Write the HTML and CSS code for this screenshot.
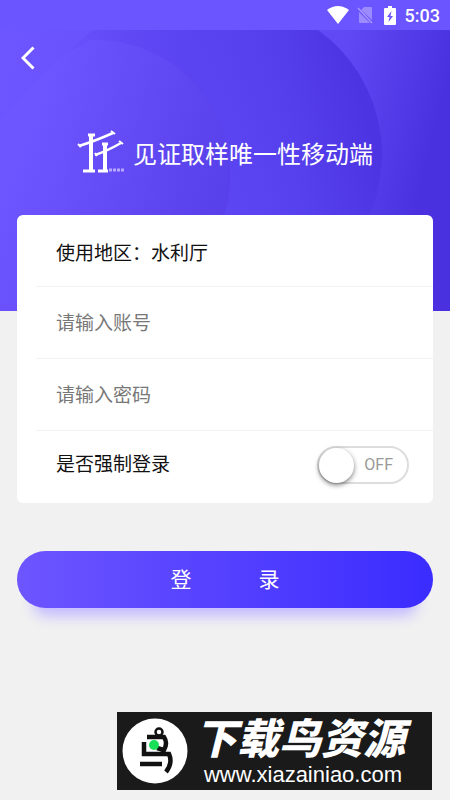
FILE: index.html
```html
<!DOCTYPE html>
<html lang="zh-CN">
<head>
<meta charset="utf-8">
<meta name="viewport" content="width=device-width, initial-scale=1">
<title>见证取样唯一性移动端</title>
<link rel="stylesheet" href="styles.css">
</head>
<body>
<div class="page">
  <div class="status">
    <svg width="22" height="18" viewBox="0 0 22 18" aria-hidden="true"><path d="M0 4Q11-4 22 4L11 18Z" fill="#fff"/></svg>
    <svg class="sim" width="16" height="18" viewBox="0 0 16 18" aria-hidden="true"><path d="M7 1H14Q15 1 15 2V14L4 4ZM2 6L13 17H3Q2 17 2 16Z" fill="#9b8bff"/><path d="M1 2L15 17" stroke="#a99bff" stroke-width="1.3"/></svg>
    <svg class="battery" width="12" height="19" viewBox="0 0 12 19" aria-hidden="true"><path d="M4 0H8V2H11Q12 2 12 3V18Q12 19 11 19H1Q0 19 0 18V3Q0 2 1 2H4Z" fill="#fff"/><path d="M7.5 5L3 11H5.5L4.5 16L9 10H6.5Z" fill="#6b55ff"/></svg>
    <time>5:03</time>
  </div>
  <header class="hero">
    <svg class="hero-art" viewBox="0 0 450 281" preserveAspectRatio="none" aria-hidden="true">
      <defs>
        <linearGradient id="base" x1="0" y1="0" x2="1" y2="0.15">
          <stop offset="0" stop-color="#6d55ff"/><stop offset="0.76" stop-color="#6049f4"/><stop offset="1" stop-color="#4931df"/>
        </linearGradient>
        <linearGradient id="disc" gradientUnits="userSpaceOnUse" x1="60" y1="150" x2="365" y2="70">
          <stop offset="0" stop-color="#6d55ff"/><stop offset="0.5" stop-color="#5f49f6"/><stop offset="1" stop-color="#4c34e3"/>
        </linearGradient>
        <linearGradient id="fade" gradientUnits="userSpaceOnUse" x1="20" y1="110" x2="225" y2="190">
          <stop offset="0" stop-color="#6d55ff"/><stop offset="1" stop-color="#563fe7"/>
        </linearGradient>
        <linearGradient id="top" gradientUnits="userSpaceOnUse" x1="60" y1="0" x2="300" y2="0">
          <stop offset="0" stop-color="#523ae6" stop-opacity="0"/><stop offset="0.55" stop-color="#523ae6" stop-opacity=".4"/><stop offset="1" stop-color="#523ae6" stop-opacity="0"/>
        </linearGradient>
      </defs>
      <rect width="450" height="281" fill="url(#base)"/>
      <path d="M93 0H318A153 153 0 0 1 350 218L310 281H0V90Q50 34 93 0Z" fill="url(#disc)"/>
      <path d="M93 0H318A153 153 0 0 1 350 218L310 281H0V90Q50 34 93 0Z" fill="url(#top)"/>
      <path d="M0 90Q30 55 65 24L90 10A135 135 0 0 1 180 250L150 281H0Z" fill="url(#fade)" opacity=".8"/>
    </svg>
    <button class="back" type="button" aria-label="返回"><svg width="14" height="24" viewBox="0 0 14 24" aria-hidden="true"><path d="M12.5 1.5L2 12L12.5 22.5" fill="none" stroke="#fff" stroke-width="3"/></svg></button>
    <div class="brand">
      <svg width="48" height="44" viewBox="0 0 48 44" fill="none" stroke="#fff" aria-hidden="true"><path d="M2 16Q18 11 36 3M18 25Q30 21 44 13" stroke-width="2.5"/><path d="M14 5V40M28 14V40" stroke-width="4"/><path d="M11 5H18M25 14H31M6 41H18M21 41H31" stroke-width="3"/><path d="M1 14L4 17M34 1L38 4M42 11L46 14M18 23L20 26" stroke-width="2"/><path d="M32 40H47" stroke="#b5a9ff" stroke-width="3" stroke-dasharray="3 1"/></svg>
      <h1>见证取样唯一性移动端</h1>
    </div>
  </header>
  <form class="login">
    <div class="card">
      <div class="row">使用地区：水利厅</div>
      <div class="row"><input class="field" type="text" placeholder="请输入账号" aria-label="账号"></div>
      <div class="row"><input class="field" type="password" placeholder="请输入密码" aria-label="密码"></div>
      <div class="row last">
        <label for="force">是否强制登录</label>
        <span class="switch"><input id="force" type="checkbox" role="switch"><span class="state">OFF</span></span>
      </div>
    </div>
    <button class="submit" type="submit"><span>登</span><span>录</span></button>
  </form>
  <footer class="mark">
    <svg width="66" height="66" viewBox="0 0 66 66" aria-hidden="true"><circle cx="33" cy="33" r="32.5" fill="#fff"/><g fill="none" stroke="#111" stroke-width="4.5"><circle cx="37" cy="14" r="3.5" stroke-width="2.5"/><path d="M25 19H42Q46 25 42 32L35 30M22 24V36H47Q51 45 44 54M18 46H40"/></g><circle cx="32" cy="27" r="5" fill="#18df58"/></svg>
    <div class="mark-text"><strong>下载鸟资源</strong><span>www.xiazainiao.com</span></div>
  </footer>
</div>
</body>
</html>
```
FILE: styles.css
```css
* { box-sizing: border-box; }
body {
  margin: 0;
  background: #f1f1f1;
  color: #111;
  font-family: Roboto, "Noto Sans CJK SC", sans-serif;
  font-size: 19px;
}
button, input { font: inherit; }
.page { min-height: 100vh; display: flex; flex-direction: column; }
.status {
  height: 30px;
  padding: 0 10px;
  display: flex;
  align-items: center;
  justify-content: flex-end;
  background: #6b55ff;
  color: #fff;
}
.sim { margin-left: 8px; }
.battery { margin: 0 9px 0 11px; }
.status time { font-size: 18px; font-weight: 500; }
.hero {
  position: relative;
  height: 281px;
  padding: 16px 19px;
  color: #fff;
}
.hero-art { position: absolute; inset: 0; width: 100%; height: 100%; }
.back {
  position: relative;
  display: block;
  padding: 0 2px;
  border: 0;
  background: none;
  height: 24px;
}
.back svg { display: block; }
.brand {
  position: relative;
  margin-top: 60px;
  display: flex;
  align-items: flex-start;
  justify-content: center;
  gap: 8px;
}
.brand svg { display: block; }
h1 { margin: 0; font-size: 24px; line-height: 50px; font-weight: 400; }
.login { position: relative; margin: -96px 17px 0; }
.card { background: #fff; border-radius: 6px; padding-left: 19px; }
.row {
  height: 72px;
  padding: 2px 24px 0 20px;
  display: flex;
  align-items: center;
  justify-content: space-between;
  border-bottom: 1px solid #f3f3f3;
}
.last { border-bottom: 0; padding-top: 0; padding-bottom: 10px; }
.field {
  width: 100%;
  padding: 0;
  border: 0;
  outline: 0;
  background: none;
  color: #111;
}
.field::placeholder { color: #777; }
.switch {
  position: relative;
  display: flex;
  margin-top: 5px;
}
.switch input {
  appearance: none;
  width: 92px;
  height: 38px;
  margin: 0;
  border: 2px solid #ddd;
  border-radius: 19px;
  background: #fff;
}
.switch input::before {
  content: "";
  display: block;
  width: 35px;
  height: 35px;
  border-radius: 50%;
  background: #fff;
  box-shadow: 0 2px 5px rgba(0, 0, 0, .5);
}
.switch input:checked::before { margin-left: auto; }
.state {
  position: absolute;
  right: 16px;
  top: 0;
  line-height: 38px;
  font-size: 16px;
  color: #999;
  pointer-events: none;
}
.submit {
  width: 100%;
  height: 57px;
  margin-top: 48px;
  padding-bottom: 4px;
  display: flex;
  align-items: center;
  justify-content: center;
  gap: 67px;
  border: 0;
  border-radius: 29px;
  background: linear-gradient(90deg, #6d55ff, #3b2cff);
  box-shadow: 0 24px 14px -16px #c3baff;
  color: #fff;
  font-size: 21px;
}
.mark {
  margin: auto 18px 10px auto;
  width: 315px;
  height: 78px;
  padding-left: 5px;
  display: flex;
  align-items: center;
  background: #1a1a1a;
  color: #fff;
}
.mark-text { flex: 1; display: flex; flex-direction: column; align-items: center; padding: 6px 20px 0 0; }
.mark-text strong { font-size: 42px; line-height: 42px; font-weight: 900; font-style: italic; }
.mark-text span { padding-left: 6px; font-family: "Liberation Sans", sans-serif; font-size: 22px; line-height: 28px; }
```
